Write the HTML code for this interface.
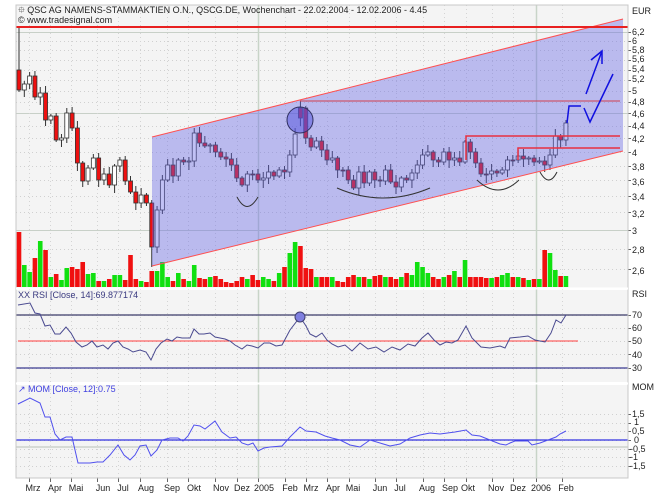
<!DOCTYPE html>
<html><head><meta charset="utf-8"><style>
body{margin:0;background:#fff;width:666px;height:499px;overflow:hidden}
svg{display:block;font-family:"Liberation Sans",sans-serif}
</style></head><body>
<svg id="s" width="666" height="499" viewBox="0 0 666 499" xmlns="http://www.w3.org/2000/svg">
<rect x="16" y="5" width="612" height="283" fill="#f4f4f4"/>
<rect x="16" y="290" width="612" height="92" fill="#f4f4f4"/>
<rect x="16" y="385" width="612" height="93" fill="#f4f4f4"/>
<g id="grid"></g>
<g id="cand"></g>
<polygon points="152,137 623,19 623,151 152,266" fill="rgb(100,100,230)" fill-opacity="0.4"/>
<line x1="152" y1="137" x2="623" y2="19" stroke="#ff5050" stroke-width="1"/>
<line x1="152" y1="266" x2="623" y2="151" stroke="#ff5050" stroke-width="1"/>
<line x1="16" y1="27" x2="628" y2="27" stroke="#e82020" stroke-width="2"/>
<line x1="300" y1="101" x2="620" y2="101" stroke="#d04050" stroke-width="1"/>
<polyline points="466,160 466,136 620,136" fill="none" stroke="#e83040" stroke-width="1.5"/>
<polyline points="518,160 518,148 620,148" fill="none" stroke="#e83040" stroke-width="1.5"/>
<circle cx="300" cy="120" r="13" fill="rgb(80,80,220)" fill-opacity="0.5" stroke="#303060"/>
<g fill="none" stroke="#333" stroke-width="1">
<path d="M237,197 Q247,216 258,197"/>
<path d="M337,188 Q383,208 430,188"/>
<path d="M477,180 Q498,200 519,180"/>
<path d="M540,172 Q549,188 557,172"/>
</g>
<g fill="none" stroke="#1010e0" stroke-width="1.5">
<polyline points="567,123 569,106 581,106"/>
<polyline points="584,108 590,122 613,74"/>
<line x1="586" y1="94" x2="602" y2="51"/>
<polyline points="591,60 602,51 602,64"/>
</g>
<!-- RSI -->
<line x1="16" y1="315" x2="628" y2="315" stroke="#5a5a80" stroke-width="1.5"/>
<line x1="16" y1="368" x2="628" y2="368" stroke="#3a3a90" stroke-width="1.2"/>
<line x1="18" y1="341" x2="578" y2="341" stroke="#ff4040" stroke-width="1"/>
<polyline fill="none" stroke="#4a4a90" stroke-width="1" points="18,305 30,303 35,313 40,314 45,326 50,325 55,334 60,334 66,327 71,333 76,342 82,347 87,345 92,341 97,347 103,345 108,349 113,343 118,341 123,347 128,349 133,352 140,350 146,352 151,360 156,349 161,343 167,339 172,341 177,337 182,338 190,338 194,329 199,334 204,334 210,333 215,337 220,338 225,339 230,341 235,345 242,349 247,345 252,346 258,348 264,343 270,343 276,346 282,345 290,330 300,317 306,326 310,334 316,337 322,333 327,340 332,344 338,347 345,345 352,351 360,343 368,349 376,347 384,352 392,347 400,350 408,344 415,346 422,338 428,333 434,340 440,345 446,342 452,343 458,340 466,326 472,338 481,347 490,348 500,346 505,348 510,338 520,337 528,336 535,340 545,342 551,333 556,320 561,323 566,315"/>
<circle cx="300" cy="317" r="5" fill="#8080e0" stroke="#404070"/>
<!-- MOM -->
<line x1="16" y1="447" x2="628" y2="447" stroke="#b8c0b8" stroke-width="1"/>
<line x1="16" y1="440" x2="628" y2="440" stroke="#3030e0" stroke-width="1.2"/>
<polyline fill="none" stroke="#5050ee" stroke-width="1" points="18,404 30,398 40,403 45,417 50,417 55,434 60,440 66,437 72,437 78,463 90,463 97,462 103,462 110,455 118,445 124,455 130,460 135,455 140,446 146,445 151,456 157,450 162,440 170,438 178,438 183,441 188,436 194,425 200,426 205,429 215,421 222,432 230,438 236,437 242,443 248,445 253,443 258,451 264,448 270,447 282,446 290,437 300,427 306,431 316,432 325,436 332,438 340,440 350,445 360,447 370,440 380,443 390,446 400,444 410,438 420,435 430,433 440,434 455,432 466,430 472,435 480,436 490,440 500,444 506,445 510,443 515,441 520,441 528,441 532,445 540,443 548,440 556,437 560,434 566,431"/>
<!-- frame -->
<rect x="16" y="5" width="612" height="473" fill="none" stroke="#c8c8c8"/>
<line x1="16" y1="288.5" x2="628" y2="288.5" stroke="#fff" stroke-width="2"/>
<line x1="16" y1="383.5" x2="628" y2="383.5" stroke="#fff" stroke-width="2"/>
<g font-size="9" fill="#222">
<text x="18" y="13">⯐ QSC AG NAMENS-STAMMAKTIEN O.N., QSCG.DE, Wochenchart - 22.02.2004 - 12.02.2006 - 4.45</text>
<text x="18" y="23">© www.tradesignal.com</text>
</g>
<text x="18" y="298" font-size="9" fill="#3a3a80">XX RSI [Close, 14]:69.877174</text>
<text x="18" y="392" font-size="9" fill="#4040e0">↗ MOM [Close, 12]:0.75</text>
<g font-size="9" fill="#222">
<text x="632" y="14">EUR</text>
<text x="632" y="297">RSI</text>
<text x="632" y="318">70</text><text x="632" y="331">60</text><text x="632" y="344">50</text><text x="632" y="358">40</text><text x="632" y="371">30</text>
<text x="632" y="390">MOM</text>
<text x="632" y="417">1,5</text><text x="634" y="425">1</text><text x="632" y="434">0,5</text><text x="634" y="443">0</text><text x="630" y="452">-0,5</text><text x="630" y="460">-1</text><text x="630" y="469">-1,5</text>
</g>
<g font-size="9" fill="#222" text-anchor="middle">
<text x="33" y="491">Mrz</text><text x="55" y="491">Apr</text><text x="76" y="491">Mai</text><text x="103" y="491">Jun</text><text x="123" y="491">Jul</text><text x="146" y="491">Aug</text><text x="172" y="491">Sep</text><text x="194" y="491">Okt</text><text x="221" y="491">Nov</text><text x="242" y="491">Dez</text><text x="264" y="491">2005</text><text x="290" y="491">Feb</text><text x="311" y="491">Mrz</text><text x="333" y="491">Apr</text><text x="353" y="491">Mai</text><text x="380" y="491">Jun</text><text x="400" y="491">Jul</text><text x="427" y="491">Aug</text><text x="450" y="491">Sep</text><text x="468" y="491">Okt</text><text x="496" y="491">Nov</text><text x="518" y="491">Dez</text><text x="541" y="491">2006</text><text x="566" y="491">Feb</text>
</g>
<g font-size="9" fill="#222">
<text x="632" y="35">6,2</text><text x="632" y="44">6</text><text x="632" y="53">5,8</text><text x="632" y="62">5,6</text><text x="632" y="72">5,4</text><text x="632" y="82">5,2</text><text x="632" y="94">5</text><text x="632" y="105">4,8</text><text x="632" y="117">4,6</text><text x="632" y="129">4,4</text><text x="632" y="142">4,2</text><text x="632" y="156">4</text><text x="632" y="170">3,8</text><text x="632" y="185">3,6</text><text x="632" y="200">3,4</text><text x="632" y="217">3,2</text><text x="632" y="234">3</text><text x="632" y="253">2,8</text><text x="632" y="274">2,6</text>
</g>
</svg>
<script>
(function(){
var NS="http://www.w3.org/2000/svg";
function el(p,t,a){var e=document.createElementNS(NS,t);for(var k in a)e.setAttribute(k,a[k]);p.appendChild(e);return e;}
var g=document.getElementById('grid'),c=document.getElementById('cand');
function py(p){return 32+(Math.log(6.2)-Math.log(p))*272.8;}
[6.2,6,5.8,5.6,5.4,5.2,5,4.8,4.6,4.4,4.2,4,3.8,3.6,3.4,3.2,3,2.8,2.6].forEach(function(p){var y=Math.round(py(p))+.5;
 var solid=(p==6.2||p==4.6||p==3);
 el(g,'line',{x1:16,y1:y,x2:628,y2:y,stroke:solid?'#c8d0c8':'#d0d0d0','stroke-dasharray':solid?'none':'1,3'});
 el(g,'line',{x1:628,y1:y,x2:631,y2:y,stroke:'#666'});});
[70,60,50,40,30].forEach(function(v){var y=Math.round(341-(v-50)*1.325)+.5;el(g,'line',{x1:16,y1:y,x2:628,y2:y,stroke:'#d0d0d0','stroke-dasharray':'1,3'});el(g,'line',{x1:628,y1:y,x2:631,y2:y,stroke:'#666'});});
[-1.5,-1,-0.5,0,0.5,1,1.5].forEach(function(v){var y=Math.round(440-v*17.4)+.5;el(g,'line',{x1:16,y1:y,x2:628,y2:y,stroke:'#d0d0d0','stroke-dasharray':'1,3'});el(g,'line',{x1:628,y1:y,x2:631,y2:y,stroke:'#666'});});
[29,50,71,97,118,140,167,188,215,237,258,285,306,327,349,375,396,423,444,466,492,513,536,562].forEach(function(x){
 var s=(x==258||x==536);
 el(g,'line',{x1:x+.5,y1:5,x2:x+.5,y2:478,stroke:s?'#c8d4c8':'#d4d4d4','stroke-width':s?1.5:1,'stroke-dasharray':s?'none':'1,3'});
 el(g,'line',{x1:x+.5,y1:478,x2:x+.5,y2:482,stroke:'#666'});});
var cl=[90,84,76,97,93,120,116,140,138,113,128,163,181,168,158,180,174,185,166,160,181,192,203,195,203,247,210,180,165,176,160,162,161,133,143,146,145,152,157,159,165,178,185,174,174,180,178,172,176,170,172,155,134,118,138,147,141,150,160,158,170,170,180,188,172,183,172,180,181,170,182,187,178,180,173,165,155,152,160,162,152,160,158,162,142,152,163,174,174,171,173,170,160,160,156,159,158,162,161,165,155,136,140,123];
var vol=[55,22,15,29,46,37,10,13,7,19,20,18,25,13,14,6,6,8,12,12,7,32,8,6,5,16,16,25,10,6,14,8,6,22,9,8,10,11,8,5,4,6,10,8,12,7,10,8,6,14,20,34,45,41,19,18,10,10,10,10,6,5,10,12,10,10,8,11,12,10,10,8,10,14,12,25,20,14,10,8,10,12,16,10,27,10,10,10,9,9,10,12,14,10,10,9,7,8,8,37,34,17,11,11];
for(var i=0;i<cl.length;i++){
 var x=19+i*5.31,o=i?cl[i-1]:70,cc=cl[i];
 if(i==53||i==54)o=108;
 var bt=Math.min(o,cc),bb=Math.max(o,cc);if(bb-bt<1)bb=bt+1;
 var hi=bt-(2+(i*7)%6),lo=bb+2+(i*5)%7;
 if(i==25)lo=267;if(i==53)hi=101;if(i==0)hi=28;
 var up=cc<o;
 el(c,'line',{x1:x,y1:hi,x2:x,y2:lo,stroke:'#333'});
 el(c,'rect',{x:x-2,y:bt,width:4,height:bb-bt,fill:up?'#fff':'#ee1010',stroke:'#333','stroke-width':0.8});
 var v=vol[i]||8;
 el(c,'rect',{x:x-2.3,y:287-v,width:4.6,height:v,fill:up?'#10e010':'#f01010'});
}
})();
</script>
</body></html>
